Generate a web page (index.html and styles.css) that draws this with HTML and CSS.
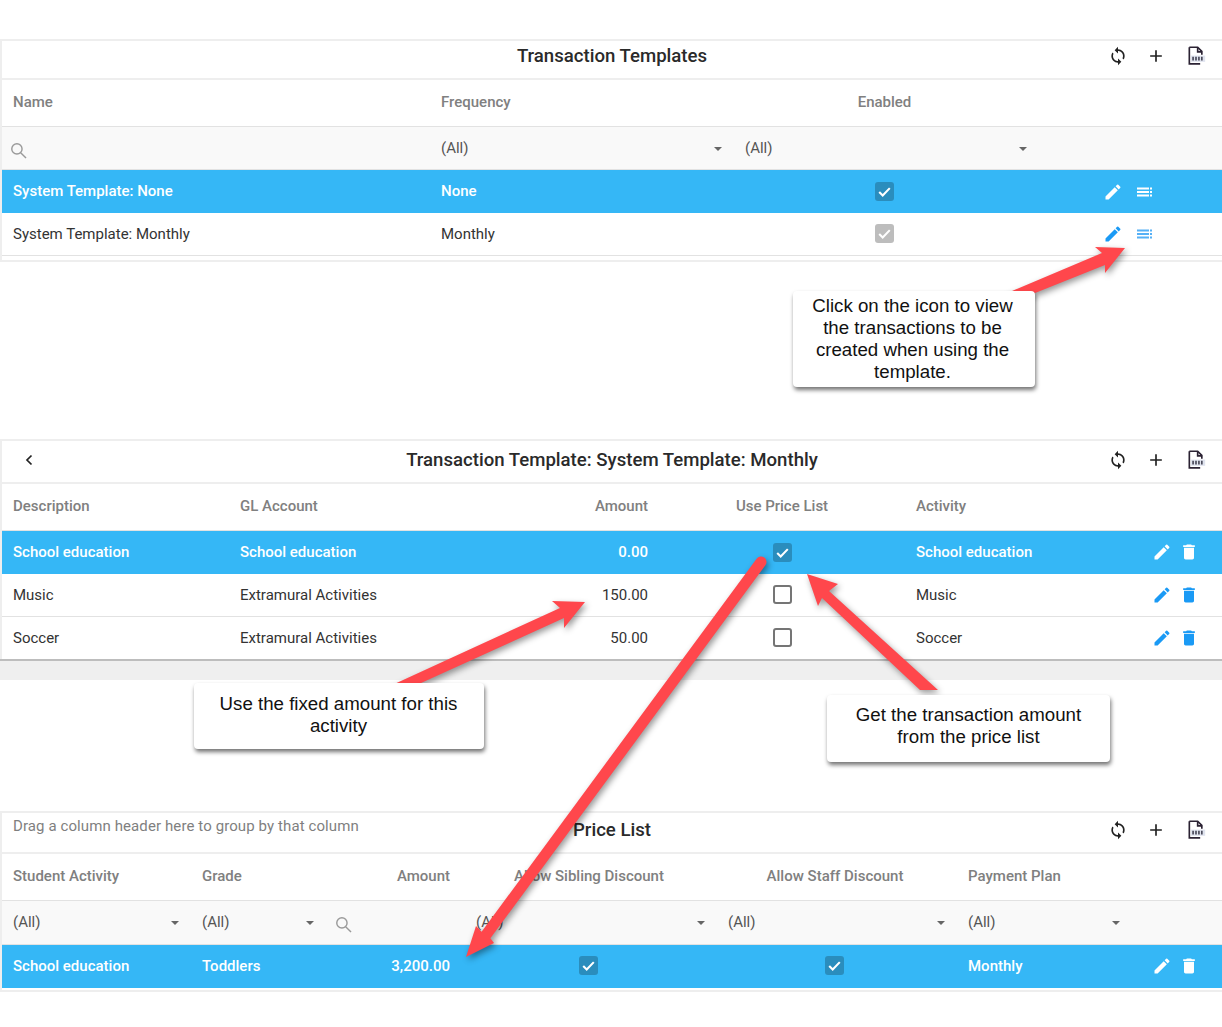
FILE: index.html
```html
<!DOCTYPE html>
<html lang="en">
<head>
<meta charset="utf-8">
<title>Transaction Templates</title>
<link rel="stylesheet" href="styles.css">
</head>
<body>
<svg width="0" height="0" class="defs">
  <symbol id="i-edit" viewBox="0 0 24 24"><path d="M3 17.25V21h3.75L17.81 9.94l-3.75-3.75L3 17.25zM20.71 7.04a1 1 0 0 0 0-1.41l-2.34-2.34a1 1 0 0 0-1.41 0l-1.83 1.83 3.75 3.75 1.83-1.83z"/></symbol>
  <symbol id="i-del" viewBox="0 0 24 24"><path d="M6 19c0 1.1.9 2 2 2h8c1.1 0 2-.9 2-2V7H6v12zM19 4h-3.5l-1-1h-5l-1 1H5v2h14V4z"/></symbol>
  <symbol id="i-list" viewBox="0 0 20 20"><path d="M3 5.500h12v2H3zM3 9h12v2H3zM3 12.500h12v2H3zM16 5.500h2v2h-2zM16 9h2v2h-2zM16 12.500h2v2h-2z"/></symbol>
  <symbol id="i-sync" viewBox="0 0 24 24"><path d="M12 4V1L8 5l4 4V6c3.31 0 6 2.69 6 6 0 1.01-.25 1.97-.7 2.8l1.46 1.46C19.54 15.03 20 13.57 20 12c0-4.42-3.58-8-8-8zm0 14c-3.31 0-6-2.69-6-6 0-1.01.25-1.97.7-2.8L5.24 7.74C4.46 8.97 4 10.43 4 12c0 4.42 3.58 8 8 8v3l4-4-4-4v3z"/></symbol>
  <symbol id="i-plus" viewBox="0 0 24 24"><path d="M19 13h-6v6h-2v-6H5v-2h6V5h2v6h6v2z"/></symbol>
  <symbol id="i-search" viewBox="0 0 24 24"><path fill="none" stroke="currentColor" stroke-width="1.800" d="M10 3.500a6.500 6.500 0 1 1 0 13 6.500 6.500 0 0 1 0-13zM14.700 14.700l6.800 6.800"/></symbol>
  <symbol id="i-file" viewBox="0 0 24 24"><path fill="none" stroke="#2b2233" stroke-width="2" d="M4 1.500h10l5 5v4M4 1.500v20h13"/><path fill="#2b2233" d="M13 2h2v4h4v2h-6z"/><path fill="#dfe3ee" d="M6 11.500h17v7.500H6z"/><path fill="#4a4a5a" d="M7.500 13h2v4.500h-2zM11 13h2v4.500h-2zM14.500 13h2v4.500h-2zM18 13h2v4.500h-2z"/></symbol>
</svg>

<section class="panel first">
  <header class="toolbar tb-a">
    <div></div>
    <h2 class="title">Transaction Templates</h2>
    <div class="tools">
      <svg class="tool"><use href="#i-sync"/></svg><svg class="tool"><use href="#i-plus"/></svg><svg class="tool"><use href="#i-file"/></svg>
    </div>
  </header>
  <div class="row head cols-a"><div class="cell">Name</div><div class="cell">Frequency</div><div class="cell center shift">Enabled</div><div></div></div>
  <div class="row filter cols-a">
    <div class="cell"><svg class="search"><use href="#i-search"/></svg></div>
    <div class="cell sel">(All)<i class="caret"></i></div>
    <div class="cell sel">(All)<i class="caret"></i></div>
    <div></div>
  </div>
  <div class="row data on cols-a"><div class="cell">System Template: None</div><div class="cell">None</div><div class="cell center shift"><span class="chk checked"><svg viewBox="0 0 18 18"><path d="M4 9.500l3.300 3.200L14 5.800"/></svg></span></div><div class="acts acts-a"><svg class="ic"><use href="#i-edit"/></svg><svg class="ic soft"><use href="#i-list"/></svg></div></div>
  <div class="row data line cols-a"><div class="cell">System Template: Monthly</div><div class="cell">Monthly</div><div class="cell center shift"><span class="chk disabled"><svg viewBox="0 0 18 18"><path d="M4 9.500l3.300 3.200L14 5.800"/></svg></span></div><div class="acts acts-a"><svg class="ic"><use href="#i-edit"/></svg><svg class="ic soft"><use href="#i-list"/></svg></div></div>
  <div class="foot"></div>
</section>

<section class="panel second">
  <header class="toolbar tb-b">
    <div class="back"><svg width="16" height="16" viewBox="0 0 16 16"><path d="M10.500 3.500L6 8l4.500 4.500" fill="none" stroke="#222" stroke-width="1.700"/></svg></div>
    <h2 class="title">Transaction Template: System Template: Monthly</h2>
    <div class="tools">
      <svg class="tool"><use href="#i-sync"/></svg><svg class="tool"><use href="#i-plus"/></svg><svg class="tool"><use href="#i-file"/></svg>
    </div>
  </header>
  <div class="row head cols-b"><div class="cell">Description</div><div class="cell">GL Account</div><div class="cell right">Amount</div><div class="cell center">Use Price List</div><div class="cell">Activity</div><div></div></div>
  <div class="row data on cols-b"><div class="cell">School education</div><div class="cell">School education</div><div class="cell right">0.00</div><div class="cell center"><span class="chk checked"><svg viewBox="0 0 18 18"><path d="M4 9.500l3.300 3.200L14 5.800"/></svg></span></div><div class="cell">School education</div><div class="acts acts-b"><svg class="ic"><use href="#i-edit"/></svg><svg class="ic"><use href="#i-del"/></svg></div></div>
  <div class="row data line cols-b"><div class="cell">Music</div><div class="cell">Extramural Activities</div><div class="cell right">150.00</div><div class="cell center"><span class="chk"></span></div><div class="cell">Music</div><div class="acts acts-b"><svg class="ic"><use href="#i-edit"/></svg><svg class="ic"><use href="#i-del"/></svg></div></div>
  <div class="row data last cols-b"><div class="cell">Soccer</div><div class="cell">Extramural Activities</div><div class="cell right">50.00</div><div class="cell center"><span class="chk"></span></div><div class="cell">Soccer</div><div class="acts acts-b"><svg class="ic"><use href="#i-edit"/></svg><svg class="ic"><use href="#i-del"/></svg></div></div>
  <div class="band"></div>
</section>

<section class="panel third">
  <header class="toolbar tb-c">
    <div class="hint">Drag a column header here to group by that column</div>
    <h2 class="title">Price List</h2>
    <div class="tools">
      <svg class="tool"><use href="#i-sync"/></svg><svg class="tool"><use href="#i-plus"/></svg><svg class="tool"><use href="#i-file"/></svg>
    </div>
  </header>
  <div class="row head cols-c"><div class="cell">Student Activity</div><div class="cell">Grade</div><div class="cell right">Amount</div><div class="cell center">Allow Sibling Discount</div><div class="cell center shift">Allow Staff Discount</div><div class="cell">Payment Plan</div><div></div></div>
  <div class="row filter cols-c">
    <div class="cell sel">(All)<i class="caret"></i></div>
    <div class="cell sel">(All)<i class="caret"></i></div>
    <div class="cell"><svg class="search"><use href="#i-search"/></svg></div>
    <div class="cell sel inset">(All)<i class="caret"></i></div>
    <div class="cell sel">(All)<i class="caret"></i></div>
    <div class="cell sel">(All)<i class="caret"></i></div>
    <div></div>
  </div>
  <div class="row data on cols-c"><div class="cell">School education</div><div class="cell">Toddlers</div><div class="cell right">3,200.00</div><div class="cell center"><span class="chk checked"><svg viewBox="0 0 18 18"><path d="M4 9.500l3.300 3.200L14 5.800"/></svg></span></div><div class="cell center shift"><span class="chk checked"><svg viewBox="0 0 18 18"><path d="M4 9.500l3.300 3.200L14 5.800"/></svg></span></div><div class="cell">Monthly</div><div class="acts acts-c"><svg class="ic"><use href="#i-edit"/></svg><svg class="ic"><use href="#i-del"/></svg></div></div>
  <div class="foot"></div>
</section>

<svg class="arrows" width="1222" height="1027" viewBox="0 0 1222 1027">
  <g class="arrow">
    <path d="M1005 294L1102 253L1095 247L1125 248L1105 273L1105 265L1035 293L1020 300Z"/>
    <path d="M390 686L560 608L552 601L585 602L564 628L564 618L410 688Z"/>
    <path d="M807 574L838 584L829 591L938 690L920 690L822 598L818 606Z"/>
    <path d="M756.600 558.700A5.500 5.500 0 0 1 765.400 565.300L490.400 938.300L494 943L466 957L476 926L481.600 931.700Z"/>
  </g>
</svg>

<div class="note note-a">Click on the icon to view the transactions to be created when using the template.</div>
<div class="note note-b">Use the fixed amount for this activity</div>
<div class="note note-c">Get the transaction amount from the price list</div>
</body>
</html>
```

FILE: styles.css
```css
* { box-sizing: border-box; }
html, body { margin: 0; padding: 0; background: #fff; }
body {
  position: relative;
  width: 1222px;
  height: 1027px;
  overflow: hidden;
  padding-top: 39px;
  font-family: Roboto, "Liberation Sans", sans-serif;
  font-size: 15px;
  color: #333;
}
.defs { position: absolute; }

.panel { border-left: 2px solid #eeeeee; border-top: 2px solid #eeeeee; }
.second { margin-top: 177px; }
.third { margin-top: 131px; }

.toolbar {
  display: grid;
  grid-template-columns: 1fr auto 1fr;
  align-items: center;
  border-bottom: 2px solid #eeeeee;
}
.tb-a { height: 39px; padding-bottom: 7px; }
.tb-b { height: 43px; padding-bottom: 3px; }
.tb-c { height: 41px; padding-bottom: 5px; }
.title { margin: 0; font-size: 18.6px; font-weight: 500; color: #2a2a2a; padding-bottom: 1px; }
.tools { display: flex; justify-content: flex-end; padding-right: 7px; }
.tool { width: 20px; height: 20px; margin: 0 9.5px; fill: #222; }
.tool:nth-child(2) { margin: 0 10px 0 9px; }
.back { padding-left: 19px; display: flex; align-items: center; }
.hint { align-self: start; padding: 4px 0 0 11px; color: #7f7f7f; white-space: nowrap; letter-spacing: .1px; }

.row { display: grid; align-items: center; }
.cols-a { grid-template-columns: 428px 304px 305px 1fr; }
.cols-b { grid-template-columns: 227px 211px 219px 246px 235px 1fr; }
.cols-c { grid-template-columns: 189px 135px 135px 256px 240px 175px 1fr; }

.head { height: 47px; padding-bottom: 3px; border-bottom: 1px solid #e2e2e2; color: #808080; font-weight: 500; }
.filter { height: 43px; border-bottom: 1px solid #e2e2e2; background: #f9f9f9; color: #555; }
.third .filter { height: 44px; padding-bottom: 1px; }
.data { height: 43px; padding-bottom: 1px; }
.third .data { padding-bottom: 2px; }
.data.line { border-bottom: 1px solid #e2e2e2; }
.data.last { height: 42px; }
.on { background: #35b7f6; color: #fff; font-weight: 500; }

.cell { padding: 0 11px; white-space: nowrap; position: relative; }
.cell.inset { padding-left: 15px; }
.center { text-align: center; }
.center.shift { padding-right: 12px; padding-left: 8px; }
.right { text-align: right; }

.caret {
  position: absolute;
  right: 12px;
  top: 8px;
  border: 4px solid transparent;
  border-top: 4px solid #666;
  border-bottom: 0;
}
.search { display: block; width: 19px; height: 19px; margin: 5px 0 0 -4px; color: #9a9a9a; }
.third .search { margin-left: -3px; }

.chk {
  display: inline-block;
  vertical-align: middle;
  width: 19px;
  height: 19px;
  border: 2px solid #757575;
  border-radius: 3px;
  background: #fff;
}
.third .chk { position: relative; left: -1px; }
.chk svg { display: block; width: 100%; height: 100%; fill: none; stroke: #fff; stroke-width: 2; }
.chk.checked { border: 0; background: #2a8dbd; }
.chk.disabled { border: 0; background: #bdbdbd; }

.acts { display: flex; align-items: center; }
.ic { width: 20px; height: 20px; fill: #1a9af5; }
.ic.soft { fill: #55b0f6; }
.on .ic { fill: #fff; }
.acts-a { padding-left: 64px; gap: 11px; margin-top: 1px; }
.acts-b { padding-left: 12px; gap: 7px; }
.acts-c { padding-left: 20px; gap: 7px; }

.foot { margin-top: 4px; height: 2px; background: #eeeeee; margin-left: -2px; }
.third .foot { margin-top: 2px; }
.band {
  height: 21px;
  margin-left: -2px;
  background: #efefef;
  border-top: 2px solid #bdbdbd;
}

.arrows { position: absolute; left: 0; top: 0; pointer-events: none; }
.arrow { fill: #ff474c; filter: drop-shadow(2px 3px 3px rgba(0, 0, 0, .4)); }

.note {
  position: absolute;
  display: flex;
  align-items: center;
  justify-content: center;
  text-align: center;
  background: #fff;
  border-radius: 4px;
  box-shadow: 1px 3px 4px rgba(0, 0, 0, .55);
  font-family: "Liberation Sans", Arial, sans-serif;
  font-size: 18.7px;
  line-height: 22px;
  color: #111;
}
.note-a { left: 793px; top: 291px; width: 242px; height: 96px; padding: 0 18px 0 15px; }
.note-b { left: 194px; top: 683px; width: 290px; height: 66px; padding: 0 21px 2px 20px; }
.note-c { left: 827px; top: 695px; width: 283px; height: 67px; padding: 0 20px 6px; }
```
